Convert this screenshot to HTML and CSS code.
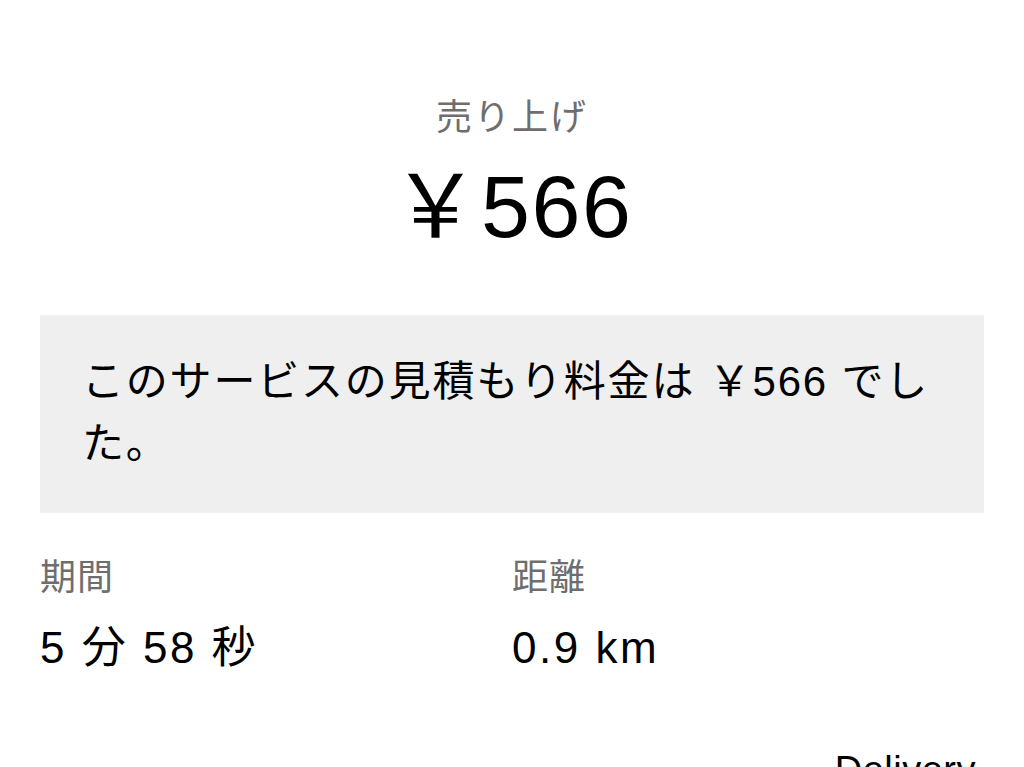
FILE: index.html
```html
<!DOCTYPE html>
<html lang="ja">
<head>
    <meta charset="UTF-8">
    <meta name="viewport" content="width=device-width, initial-scale=1.0">
    <title>売り上げ</title>
    <link rel="stylesheet" href="styles.css">
</head>
<body>
    <div class="summary">
        <div class="summaryLabel">売り上げ</div>
        <div class="summaryAmount">￥566</div>
    </div>

    <div class="notice">このサービスの見積もり料金は ￥566 でした。</div>

    <div class="stats">
        <div class="stat">
            <div class="statLabel">期間</div>
            <div class="statValue">5 分 58 秒</div>
        </div>
        <div class="stat">
            <div class="statLabel">距離</div>
            <div class="statValue">0.9 km</div>
        </div>
    </div>

    <div class="service">Delivery</div>
</body>
</html>
```

FILE: styles.css
```css
body {
    margin: 0;
    padding: 93px 40px 0;
    background-color: #fff;
    color: #000;
    font-family: "Liberation Sans", "Noto Sans CJK JP", sans-serif;
    overflow: hidden;
}
.summary {
    text-align: center;
}
.summaryLabel {
    font-size: 36px;
    line-height: 50px;
    letter-spacing: 2px;
    color: #6e6e6e;
}
.summaryAmount {
    margin-top: 14px;
    font-size: 88px;
    line-height: 100px;
    letter-spacing: 1.5px;
}
.notice {
    margin-top: 58px;
    padding: 36px 44px 38px 42px;
    background-color: #efefef;
    font-size: 42px;
    line-height: 62px;
    letter-spacing: 1.8px;
}
.stats {
    display: grid;
    grid-template-columns: 1fr 1fr;
    margin-top: 41px;
}
.statLabel {
    font-size: 36px;
    line-height: 48px;
    letter-spacing: 1px;
    color: #6e6e6e;
}
.statValue {
    margin-top: 18px;
    font-size: 44px;
    line-height: 56px;
    letter-spacing: 2.5px;
}
.service {
    margin-top: 70px;
    text-align: right;
    padding-right: 8px;
    font-size: 38px;
    line-height: 48px;
    letter-spacing: 0.5px;
}
```
